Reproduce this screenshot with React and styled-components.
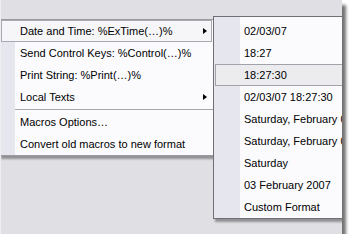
import React from 'react';
import styled, { createGlobalStyle, css } from 'styled-components';

const GlobalStyle = createGlobalStyle`
  html, body {
    margin: 0;
    padding: 0;
    background: #ffffff;
  }
  body {
    font-family: "Liberation Sans", Arial, sans-serif;
    font-size: 11px;
    color: #000000;
  }
`;

const Shot = styled.div`
  position: relative;
  width: 342px;
  height: 234px;
  background: #e0dfe4;
  border-left: 1px solid #eeeef0;
  box-sizing: border-box;
  overflow: hidden;
  box-shadow: 4px 5px 3px rgba(0, 0, 0, 0.55);
`;

const Menu = styled.div`
  position: absolute;
  top: ${props => props.$top}px;
  left: ${props => props.$left}px;
  width: ${props => props.$width}px;
  box-sizing: border-box;
  border: 1px solid ${props => props.$border};
  padding: ${props => props.$pad};
  display: flex;
  flex-direction: column;
  background: linear-gradient(
    to right,
    #e6e6ee 0,
    #e6e6ee ${props => props.$strip}px,
    #fbfbfe ${props => props.$strip}px
  );
  box-shadow: 2px 3px 2px rgba(0, 0, 0, 0.35);
  z-index: ${props => props.$z};
`;

const Item = styled.div`
  position: relative;
  height: 22px;
  box-sizing: border-box;
  display: flex;
  align-items: center;
  padding-left: ${props => props.$indent}px;
  margin: 0 1px;
  border: 1px solid transparent;
  white-space: nowrap;
  ${props => props.$open && css`
    border-color: #a9a9b2;
    background: #f6f6f9;
  `}
  ${props => props.$hot && css`
    border-color: #a2a2aa;
    background: #ececef;
  `}
`;

const Arrow = styled.span`
  position: absolute;
  right: 4px;
  top: 7px;
  width: 0;
  height: 0;
  border-top: 3.5px solid transparent;
  border-bottom: 3.5px solid transparent;
  border-left: 4px solid #000000;
`;

const Separator = styled.div`
  height: 3px;
  margin-left: 15px;
  display: flex;
  align-items: center;
  &::before {
    content: '';
    flex: 1;
    height: 1px;
    background: #a6a6ab;
  }
`;

const mainItems = [
  { label: 'Date and Time: %ExTime(…)%', sub: true, open: true },
  { label: 'Send Control Keys: %Control(…)%' },
  { label: 'Print String: %Print(…)%' },
  { label: 'Local Texts', sub: true },
  { separator: true },
  { label: 'Macros Options…' },
  { label: 'Convert old macros to new format' },
];

const subItems = [
  '02/03/07',
  '18:27',
  '18:27:30',
  '02/03/07 18:27:30',
  'Saturday, February 03, 2007',
  'Saturday, February 03, 2007 18:27:30',
  'Saturday',
  '03 February 2007',
  'Custom Format',
];

export default function App() {
  return (
    <>
      <GlobalStyle />
      <Shot>
        <Menu $top={19} $left={-2} $width={215} $border="#9a9a9f" $pad="0" $strip={15} $z={1}>
          {mainItems.map((it, i) => (it.separator ? (
            <Separator key={i} />
          ) : (
            <Item key={i} $indent={18} $open={it.open}>
              {it.label}
              {it.sub && <Arrow />}
            </Item>
          )))}
        </Menu>
        <Menu $top={16} $left={212} $width={200} $border="#6f6f74" $pad="3px 0 0" $strip={26} $z={2}>
          {subItems.map((label, i) => (
            <Item key={label} $indent={28} $hot={i === 2}>
              {label}
            </Item>
          ))}
        </Menu>
      </Shot>
    </>
  );
}
